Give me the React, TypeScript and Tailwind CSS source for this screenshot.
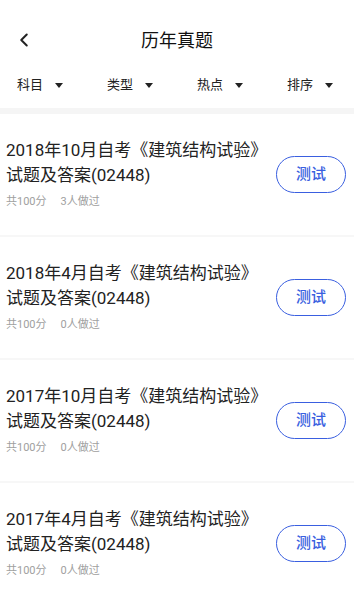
import { ChevronLeft } from "lucide-react";

const filters = ["科目", "类型", "热点", "排序"];

const papers = [
  { title: "2018年10月自考《建筑结构试验》试题及答案(02448)", done: 3 },
  { title: "2018年4月自考《建筑结构试验》试题及答案(02448)", done: 0 },
  { title: "2017年10月自考《建筑结构试验》试题及答案(02448)", done: 0 },
  { title: "2017年4月自考《建筑结构试验》试题及答案(02448)", done: 0 },
];

export default function App() {
  return (
    <div
      className="h-[593px] w-[354px] overflow-hidden bg-white text-[#222]"
      style={{ fontFamily: '"Roboto", "Noto Sans CJK SC", sans-serif' }}
    >
      {/* 顶部标题 */}
      <div className="relative flex h-[62px] items-center justify-center pt-[18px]">
        <button className="absolute left-[13px] top-[29px] text-[#222]">
          <ChevronLeft size={22} strokeWidth={2.2} />
        </button>
        <h1 className="text-[18px] font-normal text-[#111]">历年真题</h1>
      </div>

      {/* 筛选 */}
      <div className="flex h-[46px] items-center pl-[17px]">
        {filters.map((f) => (
          <div key={f} className="flex w-[90px] shrink-0 items-center">
            <span className="text-[13px] text-[#222]">{f}</span>
            <span className="ml-[12px] h-0 w-0 border-x-[4px] border-t-[5px] border-x-transparent border-t-[#222]" />
          </div>
        ))}
      </div>
      <div className="h-[6px] bg-[#f5f5f5]" />

      {/* 列表 */}
      {papers.map((p) => (
        <div
          key={p.title}
          className="flex h-[123px] items-center border-b-2 border-[#f7f7f7] pl-[6px] pr-[8px]"
        >
          <div className="flex-1 pb-[2px]">
            <p className="w-[262px] text-[17px] leading-[25px] text-[#222]">{p.title}</p>
            <div className="mt-[6px] flex gap-[14px] text-[11px] leading-[16px] text-[#a0a0a0]">
              <span>共100分</span>
              <span>{p.done}人做过</span>
            </div>
          </div>
          <button className="flex h-[37px] w-[70px] shrink-0 items-center justify-center rounded-full border-[1.5px] border-[#3a5fe0] text-[15px] font-medium text-[#3a5fe0]">
            测试
          </button>
        </div>
      ))}
    </div>
  );
}
